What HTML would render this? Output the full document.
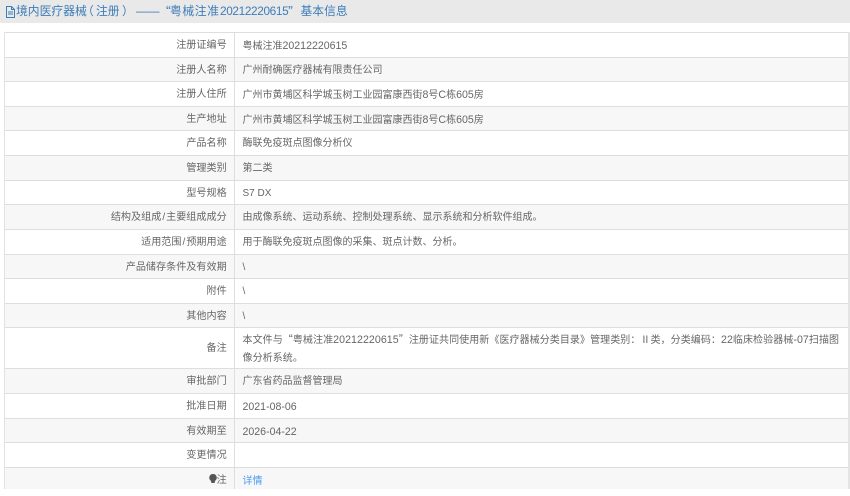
<!DOCTYPE html>
<html><head><meta charset="utf-8"><style>
html,body{margin:0;padding:0;background:#fff}
body{width:850px;height:489px;overflow:hidden;position:relative;font-family:"Liberation Sans","Noto Sans CJK SC",sans-serif;font-size:10.1px;color:#666}
.hd{position:absolute;left:0;top:0;width:850px;height:23px;background:#e9e9e9}
.ttl span,.ttl svg{position:absolute;top:0;white-space:nowrap}
.ttl{position:absolute;left:0;top:1.5px;font-size:11.8px;line-height:19px;color:#3d7db8;filter:blur(.25px)}
.tb{position:absolute;left:4px;top:32px;width:843px;height:457px;border-left:1px solid #e2e2e2;border-right:2px solid #e4e4e4;filter:blur(.25px)}
.r{position:absolute;left:0;width:843px;box-sizing:border-box;border-top:1px solid #dedede}
.r.e{background:#f7f7f7}
.l{position:absolute;left:0;top:0;bottom:0;width:221.7px;text-align:right;white-space:nowrap}
.l i{font-style:normal;padding:0 1px}
.v{position:absolute;left:237.5px;top:0;white-space:nowrap;font-size:10px}
.d{font-size:10.6px}
.ln{line-height:26.6px}
.m{line-height:18px;top:2px;letter-spacing:.07px}
.div{position:absolute;left:229px;top:0;width:1px;height:457px;background:#dedede}
.q{font-family:"Noto Sans CJK SC",sans-serif}
a{color:#4a9bf0;text-decoration:none}
</style></head><body>
<div class="hd"></div>
<div class="ttl"><svg width="11" height="12" viewBox="0 0 11 12" style="left:5px;top:4px"><path d="M1.5 .5h5l3 3v8h-8zM6.5 .5v3h3M3 6h5M3 8h5" fill="none" stroke="#3d7db8" stroke-width="1"/></svg><span style="left:16px">境内医疗器械</span><span style="left:82px">（</span><span style="left:96px">注册</span><span style="left:122px">）</span><span style="left:136px">——</span><span style="left:159px" class="q">“</span><span style="left:170px;letter-spacing:.6px">粤械注准</span><span style="left:220px;letter-spacing:-.35px">20212220615</span><span style="left:288px" class="q">”</span><span style="left:300.5px">基本信息</span></div>
<div class="tb">
<div class="r ln" style="top:0;height:25px"><div class="l">注册证编号</div><div class="v">粤械注准<span class="d">20212220615</span></div></div>
<div class="r ln e" style="top:25px;height:24px"><div class="l">注册人名称</div><div class="v">广州耐确医疗器械有限责任公司</div></div>
<div class="r ln" style="top:49px;height:25px"><div class="l">注册人住所</div><div class="v">广州市黄埔区科学城玉树工业园富康西街<span class="d">8</span>号<span class="d">C</span>栋<span class="d">605</span>房</div></div>
<div class="r ln e" style="top:74px;height:24px"><div class="l">生产地址</div><div class="v">广州市黄埔区科学城玉树工业园富康西街<span class="d">8</span>号<span class="d">C</span>栋<span class="d">605</span>房</div></div>
<div class="r ln" style="top:98px;height:25px"><div class="l">产品名称</div><div class="v">酶联免疫斑点图像分析仪</div></div>
<div class="r ln e" style="top:123px;height:25px"><div class="l">管理类别</div><div class="v">第二类</div></div>
<div class="r ln" style="top:148px;height:24px"><div class="l">型号规格</div><div class="v">S7 DX</div></div>
<div class="r ln e" style="top:172px;height:25px"><div class="l">结构及组成<i>/</i>主要组成成分</div><div class="v">由成像系统、运动系统、控制处理系统、显示系统和分析软件组成。</div></div>
<div class="r ln" style="top:197px;height:25px"><div class="l">适用范围<i>/</i>预期用途</div><div class="v">用于酶联免疫斑点图像的采集、斑点计数、分析。</div></div>
<div class="r ln e" style="top:222px;height:24px"><div class="l">产品储存条件及有效期</div><div class="v">\</div></div>
<div class="r ln" style="top:246px;height:25px"><div class="l">附件</div><div class="v">\</div></div>
<div class="r ln e" style="top:271px;height:24px"><div class="l">其他内容</div><div class="v">\</div></div>
<div class="r" style="top:295px;height:41px"><div class="l" style="line-height:42px">备注</div><div class="v m">本文件与<span class="q">“</span>粤械注准<span class="d">20212220615</span><span class="q">”</span>注册证共同使用新《医疗器械分类目录》管理类别：Ⅱ类，分类编码：<span class="d">22</span>临床检验器械<span class="d">-07</span>扫描图<br>像分析系统。</div></div>
<div class="r ln e" style="top:336px;height:25px"><div class="l">审批部门</div><div class="v">广东省药品监督管理局</div></div>
<div class="r ln" style="top:361px;height:25px"><div class="l">批准日期</div><div class="v d">2021-08-06</div></div>
<div class="r ln e" style="top:386px;height:24px"><div class="l">有效期至</div><div class="v d">2026-04-22</div></div>
<div class="r ln" style="top:410px;height:25px"><div class="l">变更情况</div></div>
<div class="r ln e" style="top:435px;height:22px"><div class="l"><svg width="8" height="10" viewBox="0 0 8 10" style="vertical-align:-1px"><path d="M4 0a3.7 3.7 0 0 1 2.2 6.7L5.5 9h-3l-.7-2.3A3.7 3.7 0 0 1 4 0z" fill="#555"/></svg>注</div><div class="v" style="top:1px"><a>详情</a></div></div>
<div class="div"></div>
</div>
</body></html>
